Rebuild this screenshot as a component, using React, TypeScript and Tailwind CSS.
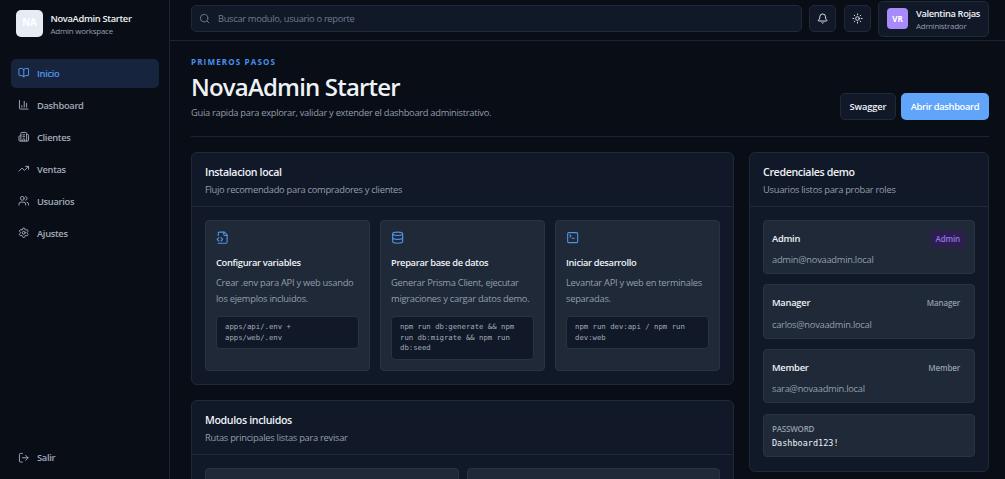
import type { ReactNode } from 'react'
import {
  Bell,
  BookOpen,
  Building2,
  ChartColumn,
  Database,
  LogOut,
  Search,
  Settings,
  SquareTerminal,
  Sun,
  TrendingUp,
  Users,
} from 'lucide-react'

// File outline with the code brackets on its left side
function FileCodeIcon({ size, className }: { size?: number; className?: string }) {
  return (
    <svg
      width={size}
      height={size}
      viewBox="0 0 24 24"
      fill="none"
      stroke="currentColor"
      strokeWidth={2}
      strokeLinecap="round"
      strokeLinejoin="round"
      className={className}
    >
      <path d="M4 22h14a2 2 0 0 0 2-2V7l-5-5H6a2 2 0 0 0-2 2v4" />
      <path d="M14 2v4a2 2 0 0 0 2 2h4" />
      <path d="m5 12-3 3 3 3" />
      <path d="m9 18 3-3-3-3" />
    </svg>
  )
}

const navItems = [
  { label: 'Inicio', icon: BookOpen, active: true },
  { label: 'Dashboard', icon: ChartColumn, active: false },
  { label: 'Clientes', icon: Building2, active: false },
  { label: 'Ventas', icon: TrendingUp, active: false },
  { label: 'Usuarios', icon: Users, active: false },
  { label: 'Ajustes', icon: Settings, active: false },
]

const steps = [
  {
    title: 'Configurar variables',
    text: ['Crear .env para API y web usando', 'los ejemplos incluidos.'],
    code: ['apps/api/.env +', 'apps/web/.env'],
    icon: FileCodeIcon,
  },
  {
    title: 'Preparar base de datos',
    text: ['Generar Prisma Client, ejecutar', 'migraciones y cargar datos demo.'],
    code: ['npm run db:generate && npm', 'run db:migrate && npm run', 'db:seed'],
    icon: Database,
  },
  {
    title: 'Iniciar desarrollo',
    text: ['Levantar API y web en terminales', 'separadas.'],
    code: ['npm run dev:api / npm run', 'dev:web'],
    icon: SquareTerminal,
  },
]

const users = [
  { role: 'Admin', email: 'admin@novaadmin.local', highlight: true },
  { role: 'Manager', email: 'carlos@novaadmin.local', highlight: false },
  { role: 'Member', email: 'sara@novaadmin.local', highlight: false },
]

function Panel({ title, subtitle, className = '', children }: {
  title: string
  subtitle: string
  className?: string
  children: ReactNode
}) {
  return (
    <section className={`rounded-md border border-[#1f2a38] bg-[#111827] ${className}`}>
      <div className="h-[54px] border-b border-[#1f2a38] px-[13px] pt-[12px]">
        <h2 className="text-[10.67px] leading-[15px] font-semibold tracking-[-0.37px] text-[#eef2f7]">{title}</h2>
        <p className="mt-[2px] text-[9.33px] leading-[16px] tracking-[-0.28px] text-[#929eae]">{subtitle}</p>
      </div>
      {children}
    </section>
  )
}

function Sidebar() {
  return (
    <aside className="flex w-[170px] shrink-0 flex-col border-r border-[#1b2431] px-[10.5px] pt-[10px] pb-[6.5px]">
      <div className="flex items-center gap-[7.5px] pl-[5.5px]">
        <div className="flex size-[27px] items-center justify-center rounded-[5px] bg-[#e6ecf4] text-[9.67px] font-bold text-white">
          NA
        </div>
        <div className="pt-px whitespace-nowrap">
          <p className="text-[9.33px] leading-[12px] font-semibold tracking-[-0.32px] text-[#eef2f7]">NovaAdmin Starter</p>
          <p className="text-[8px] leading-[11px] tracking-[-0.26px] text-[#929eae]">Admin workspace</p>
        </div>
      </div>

      <nav className="mt-[21.5px] flex flex-col gap-[2.67px]">
        {navItems.map(({ label, icon: Icon, active }) => (
          <a
            key={label}
            className={`flex h-[29.33px] items-center gap-[7.5px] rounded-[5px] px-[7.5px] text-[9.33px] font-semibold tracking-[-0.32px] ${
              active ? 'bg-[#17243e] text-[#5298ec]' : 'text-[#a0abba]'
            }`}
          >
            <Icon size={11.5} />
            <span className="pt-px">{label}</span>
          </a>
        ))}
      </nav>

      <button className="mt-auto flex h-[29.33px] items-center gap-[7.5px] px-[7.5px] text-[9.33px] font-semibold tracking-[-0.32px] text-[#a0abba]">
        <LogOut size={11.5} />
        Salir
      </button>
    </aside>
  )
}

function Topbar() {
  return (
    <header className="flex h-[41px] items-center gap-[7.33px] border-b border-[#1b2431] pr-[16px] pb-[3px] pl-[21px]">
      <div className="flex h-[27px] flex-1 items-center gap-[7.5px] rounded-[5px] border border-[#1f2a38] bg-[#111827] px-[7.33px] text-[#6f7c91]">
        <Search size={11.2} />
        <span className="pt-px text-[9.33px] tracking-[-0.32px]">Buscar modulo, usuario o reporte</span>
      </div>
      <button className="flex size-[27px] items-center justify-center rounded-[5px] border border-[#1f2a38] bg-[#111827] text-[#e5eaf1]">
        <Bell size={11.33} />
      </button>
      <button className="flex size-[27px] items-center justify-center rounded-[5px] border border-[#1f2a38] bg-[#111827] text-[#e5eaf1]">
        <Sun size={11} />
      </button>
      <div className="flex h-[36px] w-[111px] items-center gap-[8px] rounded-[5px] border border-[#1f2a38] bg-[#111827] pl-[8px]">
        <div className="flex size-[21px] items-center justify-center rounded-[4px] bg-[#a78bfa] text-[8px] font-bold text-white">
          VR
        </div>
        <div className="pt-px whitespace-nowrap">
          <p className="text-[9.33px] leading-[12px] font-semibold tracking-[-0.36px] text-[#eef2f7]">Valentina Rojas</p>
          <p className="text-[8px] leading-[11px] tracking-[-0.25px] text-[#929eae]">Administrador</p>
        </div>
      </div>
    </header>
  )
}

export default function App() {
  return (
    <div className="flex h-[479px] w-[1005px] overflow-hidden bg-[#090d15] font-['Open_Sans','Noto_Sans',sans-serif] text-[#eef2f7]">
      <Sidebar />
      <div className="flex min-w-0 flex-1 flex-col">
        <Topbar />
        <main className="min-h-0 flex-1 overflow-hidden pt-[15px] pr-[16px] pl-[21px]">
          <div className="flex h-[81px] items-start justify-between border-b border-[#1b2431]">
            <div>
              <p className="text-[8px] leading-[12px] font-bold tracking-[1.16px] text-[#4a90ee]">PRIMEROS PASOS</p>
              <h1 className="mt-[5px] text-[24px] leading-[28px] font-semibold tracking-[-0.82px]">NovaAdmin Starter</h1>
              <p className="mt-[4px] text-[9.33px] leading-[16px] tracking-[-0.29px] text-[#929eae]">
                Guia rapida para explorar, validar y extender el dashboard administrativo.
              </p>
            </div>
            <div className="mt-[37px] flex gap-[5px] text-[9.33px] font-semibold whitespace-nowrap">
              <button className="h-[27px] w-[56px] rounded-[5px] border border-[#1f2a38] bg-[#111827] pt-px tracking-[-0.15px]">
                Swagger
              </button>
              <button className="h-[27px] w-[88px] rounded-[5px] bg-[#60a5fa] pt-px tracking-[-0.34px] text-white">
                Abrir dashboard
              </button>
            </div>
          </div>

          <div className="mt-[15px] flex items-start gap-[15px]">
            <div className="flex w-[543px] flex-col gap-[15px]">
              <Panel title="Instalacion local" subtitle="Flujo recomendado para compradores y clientes">
                <div className="grid grid-cols-3 gap-[10px] p-[13px]">
                  {steps.map(({ title, text, code, icon: Icon }) => (
                    <article key={title} className="h-[151px] rounded-[4px] border border-[#283442] bg-[#1f2937] px-[10px] pt-[10px]">
                      <Icon size={13.33} className="text-[#4f94e8]" />
                      <h3 className="mt-[10.3px] text-[9.33px] leading-[16px] font-semibold tracking-[-0.33px]">{title}</h3>
                      <p className="mt-[4px] text-[9.33px] leading-[16px] tracking-[-0.26px] whitespace-nowrap text-[#929eae]">
                        {text[0]}<br />{text[1]}
                      </p>
                      <div className="mt-[9.4px] rounded-[4px] border border-[#283442] bg-[#111827] px-[8px] py-[5px] font-['DejaVu_Sans_Mono',monospace] text-[7.3px] leading-[10.67px] whitespace-nowrap text-[#a0abba]">
                        {code.map((line) => <div key={line}>{line}</div>)}
                      </div>
                    </article>
                  ))}
                </div>
              </Panel>

              <Panel title="Modulos incluidos" subtitle="Rutas principales listas para revisar">
                <div className="grid grid-cols-2 gap-[8px] p-[13px]">
                  <div className="h-[60px] rounded-[4px] border border-[#283442] bg-[#1f2937]" />
                  <div className="h-[60px] rounded-[4px] border border-[#283442] bg-[#1f2937]" />
                </div>
              </Panel>
            </div>

            <Panel title="Credenciales demo" subtitle="Usuarios listos para probar roles" className="flex-1">
              <div className="flex flex-col gap-[10.47px] px-[13px] pt-[12.7px] pb-[13.6px]">
                {users.map((user) => (
                  <div key={user.role} className="h-[54.2px] rounded-[4px] border border-[#283442] bg-[#1f2937] px-[8px] pt-[8.5px]">
                    <div className="flex h-[19px] items-center justify-between">
                      <span className="text-[9.33px] font-semibold tracking-[-0.25px]">{user.role}</span>
                      <span
                        className={`flex h-[18px] items-center rounded-[4px] px-[6px] text-[8px] font-semibold tracking-[-0.15px] ${
                          user.highlight ? 'bg-[#2c1f4c] text-[#9a70f0]' : 'text-[#929eae]'
                        }`}
                      >
                        {user.role}
                      </span>
                    </div>
                    <p className="mt-[3.7px] text-[9.33px] leading-[16px] tracking-[-0.27px] text-[#929eae]">{user.email}</p>
                  </div>
                ))}
                <div className="h-[43.7px] rounded-[4px] border border-[#283442] bg-[#1f2937] px-[8px] pt-[7px]">
                  <p className="text-[8px] leading-[13px] font-semibold tracking-[-0.2px] text-[#929eae]">PASSWORD</p>
                  <p className="mt-[1px] font-['DejaVu_Sans_Mono',monospace] text-[8.5px] leading-[14px]">Dashboard123!</p>
                </div>
              </div>
            </Panel>
          </div>
        </main>
      </div>
    </div>
  )
}
